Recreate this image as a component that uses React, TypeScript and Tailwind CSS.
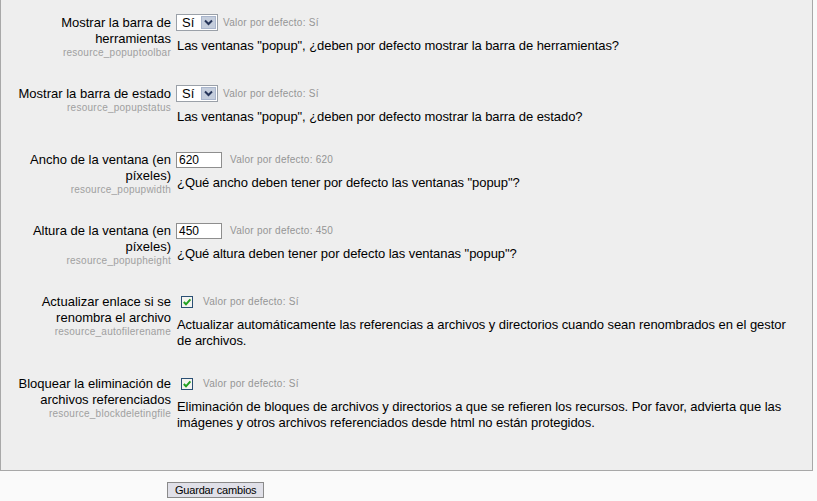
import React from "react";

type Ctrl = { kind: "select" | "input" | "check"; value?: string };
type Row = { label: string; name: string; ctrl: Ctrl; def: string; desc: string };

const rows: Row[] = [
  {
    label: "Mostrar la barra de herramientas",
    name: "resource_popuptoolbar",
    ctrl: { kind: "select", value: "Sí" },
    def: "Valor por defecto: Sí",
    desc: 'Las ventanas "popup", ¿deben por defecto mostrar la barra de herramientas?',
  },
  {
    label: "Mostrar la barra de estado",
    name: "resource_popupstatus",
    ctrl: { kind: "select", value: "Sí" },
    def: "Valor por defecto: Sí",
    desc: 'Las ventanas "popup", ¿deben por defecto mostrar la barra de estado?',
  },
  {
    label: "Ancho de la ventana (en píxeles)",
    name: "resource_popupwidth",
    ctrl: { kind: "input", value: "620" },
    def: "Valor por defecto: 620",
    desc: '¿Qué ancho deben tener por defecto las ventanas "popup"?',
  },
  {
    label: "Altura de la ventana (en píxeles)",
    name: "resource_popupheight",
    ctrl: { kind: "input", value: "450" },
    def: "Valor por defecto: 450",
    desc: '¿Qué altura deben tener por defecto las ventanas "popup"?',
  },
  {
    label: "Actualizar enlace si se renombra el archivo",
    name: "resource_autofilerename",
    ctrl: { kind: "check" },
    def: "Valor por defecto: Sí",
    desc: "Actualizar automáticamente las referencias a archivos y directorios cuando sean renombrados en el gestor de archivos.",
  },
  {
    label: "Bloquear la eliminación de archivos referenciados",
    name: "resource_blockdeletingfile",
    ctrl: { kind: "check" },
    def: "Valor por defecto: Sí",
    desc: "Eliminación de bloques de archivos y directorios a que se refieren los recursos. Por favor, advierta que las imágenes y otros archivos referenciados desde html no están protegidos.",
  },
];

function Control({ ctrl }: { ctrl: Ctrl }) {
  if (ctrl.kind === "select") {
    return (
      <div className="flex h-[17px] w-[42px] items-stretch border border-[#9aa0a8] bg-white">
        <div className="flex flex-1 items-center pl-[5px] text-[13px] leading-none text-black">{ctrl.value}</div>
        <div className="m-[1px] flex w-[15px] items-center justify-center border border-[#a9b5cc] bg-[#c4cddc]">
          <svg width="9" height="7" viewBox="0 0 9 7">
            <path d="M1 1.5 L4.5 5 L8 1.5" fill="none" stroke="#26355a" strokeWidth="2" />
          </svg>
        </div>
      </div>
    );
  }
  if (ctrl.kind === "input") {
    return (
      <div className="flex h-[16px] w-[46px] items-center border border-[#8e8e8e] bg-white pl-[2px] text-[12px] leading-none text-black">
        {ctrl.value}
      </div>
    );
  }
  return (
    <div className="ml-[5px] flex h-[12px] w-[12px] items-center justify-center border border-[#2a4f74] bg-[#f4f4f0]">
      <svg width="10" height="10" viewBox="0 0 10 10">
        <path d="M1.8 5 L4 7.3 L8.4 2.4" fill="none" stroke="#21a121" strokeWidth="2" />
      </svg>
    </div>
  );
}

export default function App() {
  return (
    <div className="min-h-[501px] w-[817px] bg-[#fafafa] font-['Liberation_Sans',Arial,sans-serif] text-black">
      <div className="w-[813px] border-x border-b border-[#a8a8a8] bg-[#eeeeee] pb-[13px] pt-[14px]">
        {rows.map((r) => (
          <div key={r.name} className="mb-[26px] flex items-start">
            <div className="w-[170px] shrink-0 pl-[8px] pt-[1px] text-right">
              <div className="text-[13px] leading-[16px]">{r.label}</div>
              <div className="text-[10px] leading-[12px] tracking-[0.25px] text-[#a0a0a0]">{r.name}</div>
            </div>
            <div className="ml-[5px] w-[622px]">
              <div className="flex h-[17px] items-center">
                <Control ctrl={r.ctrl} />
                <span
                  className={
                    r.ctrl.kind === "select"
                      ? "ml-[5px] text-[10px] leading-none tracking-[0.25px] text-[#959595]"
                      : r.ctrl.kind === "input"
                      ? "ml-[8px] text-[10px] leading-none tracking-[0.25px] text-[#959595]"
                      : "ml-[10px] text-[10px] leading-none tracking-[0.25px] text-[#959595]"
                  }
                >
                  {r.def}
                </span>
              </div>
              <div className="mt-[7px] pl-[1px] text-[13px] leading-[16px] tracking-[-0.06px]">{r.desc}</div>
            </div>
          </div>
        ))}
      </div>
      <div className="pl-[167px] pt-[11px]">
        <button className="flex h-[16px] items-center border border-[#8a8a8a] bg-[#e0e0e8] px-[7px] text-[11px] leading-none tracking-[-0.2px] text-black">
          Guardar cambios
        </button>
      </div>
    </div>
  );
}
